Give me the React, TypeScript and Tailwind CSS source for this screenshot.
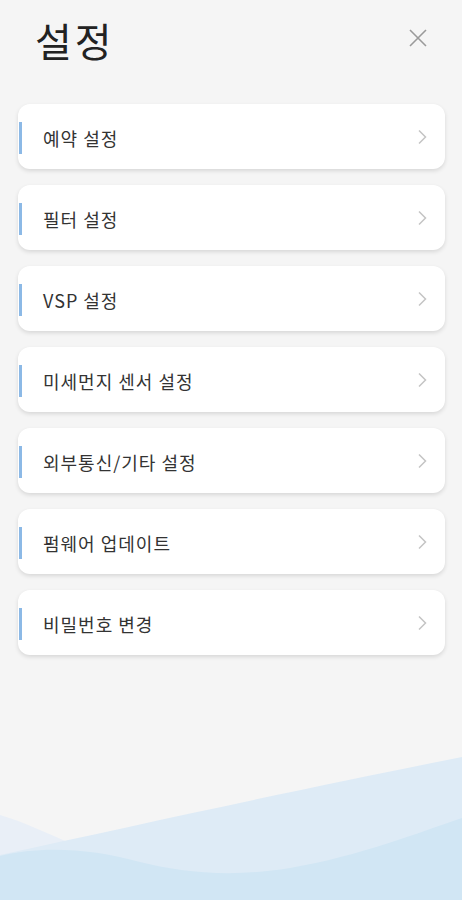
import React from 'react';

const items = [
  '예약 설정',
  '필터 설정',
  'VSP 설정',
  '미세먼지 센서 설정',
  '외부통신/기타 설정',
  '펌웨어 업데이트',
  '비밀번호 변경',
];

const font = { fontFamily: '"Noto Sans CJK KR", "Noto Sans", sans-serif' };

const App: React.FC = () => {
  return (
    <div className="relative w-[462px] h-[900px] overflow-hidden bg-[#f5f5f5]" style={font}>
      <svg className="absolute left-0 bottom-0" width="462" height="200" viewBox="0 700 462 200">
        <path d="M0 815 C25 822 50 835 75 845 L0 860 Z" fill="#e9eff7" />
        <path d="M0 855 C150 822 320 785 462 757 L462 900 L0 900 Z" fill="#deebf6" />
        <path d="M0 856 C40 846 90 848 140 862 C180 872 230 878 290 868 C360 856 420 832 462 818 L462 900 L0 900 Z" fill="#d1e6f4" />
      </svg>

      <div className="relative flex flex-col">
        <div className="flex items-start justify-between pl-[35px] pr-[34px] pt-[16px] h-[104px]">
          <h1 className="text-[40px] font-normal text-[#222] leading-[48px] tracking-[3px]">설정</h1>
          <svg width="20" height="20" viewBox="0 0 20 20" className="mt-[12px]">
            <path d="M2 2 L18 18 M18 2 L2 18" stroke="#9a9a9a" strokeWidth="1.6" />
          </svg>
        </div>

        <div className="flex flex-col gap-4 px-[18px]">
          {items.map((label) => (
            <div
              key={label}
              className="flex items-center h-[65px] w-[427px] bg-white rounded-[12px] shadow-[0_2px_4px_rgba(0,0,0,0.12)]"
            >
              <div className="w-[3px] h-[32px] bg-[#8cb9e6] ml-[1px] mt-[3px]" />
              <span className="ml-[21px] flex-1 text-[18px] tracking-[1px] text-[#333] mt-[3px]">{label}</span>
              <svg width="10" height="16" viewBox="0 0 10 16" className="mr-[18px]">
                <path d="M2 1.5 L8.5 8 L2 14.5" fill="none" stroke="#c4c4c4" strokeWidth="1.5" />
              </svg>
            </div>
          ))}
        </div>
      </div>
    </div>
  );
};

export default App;
